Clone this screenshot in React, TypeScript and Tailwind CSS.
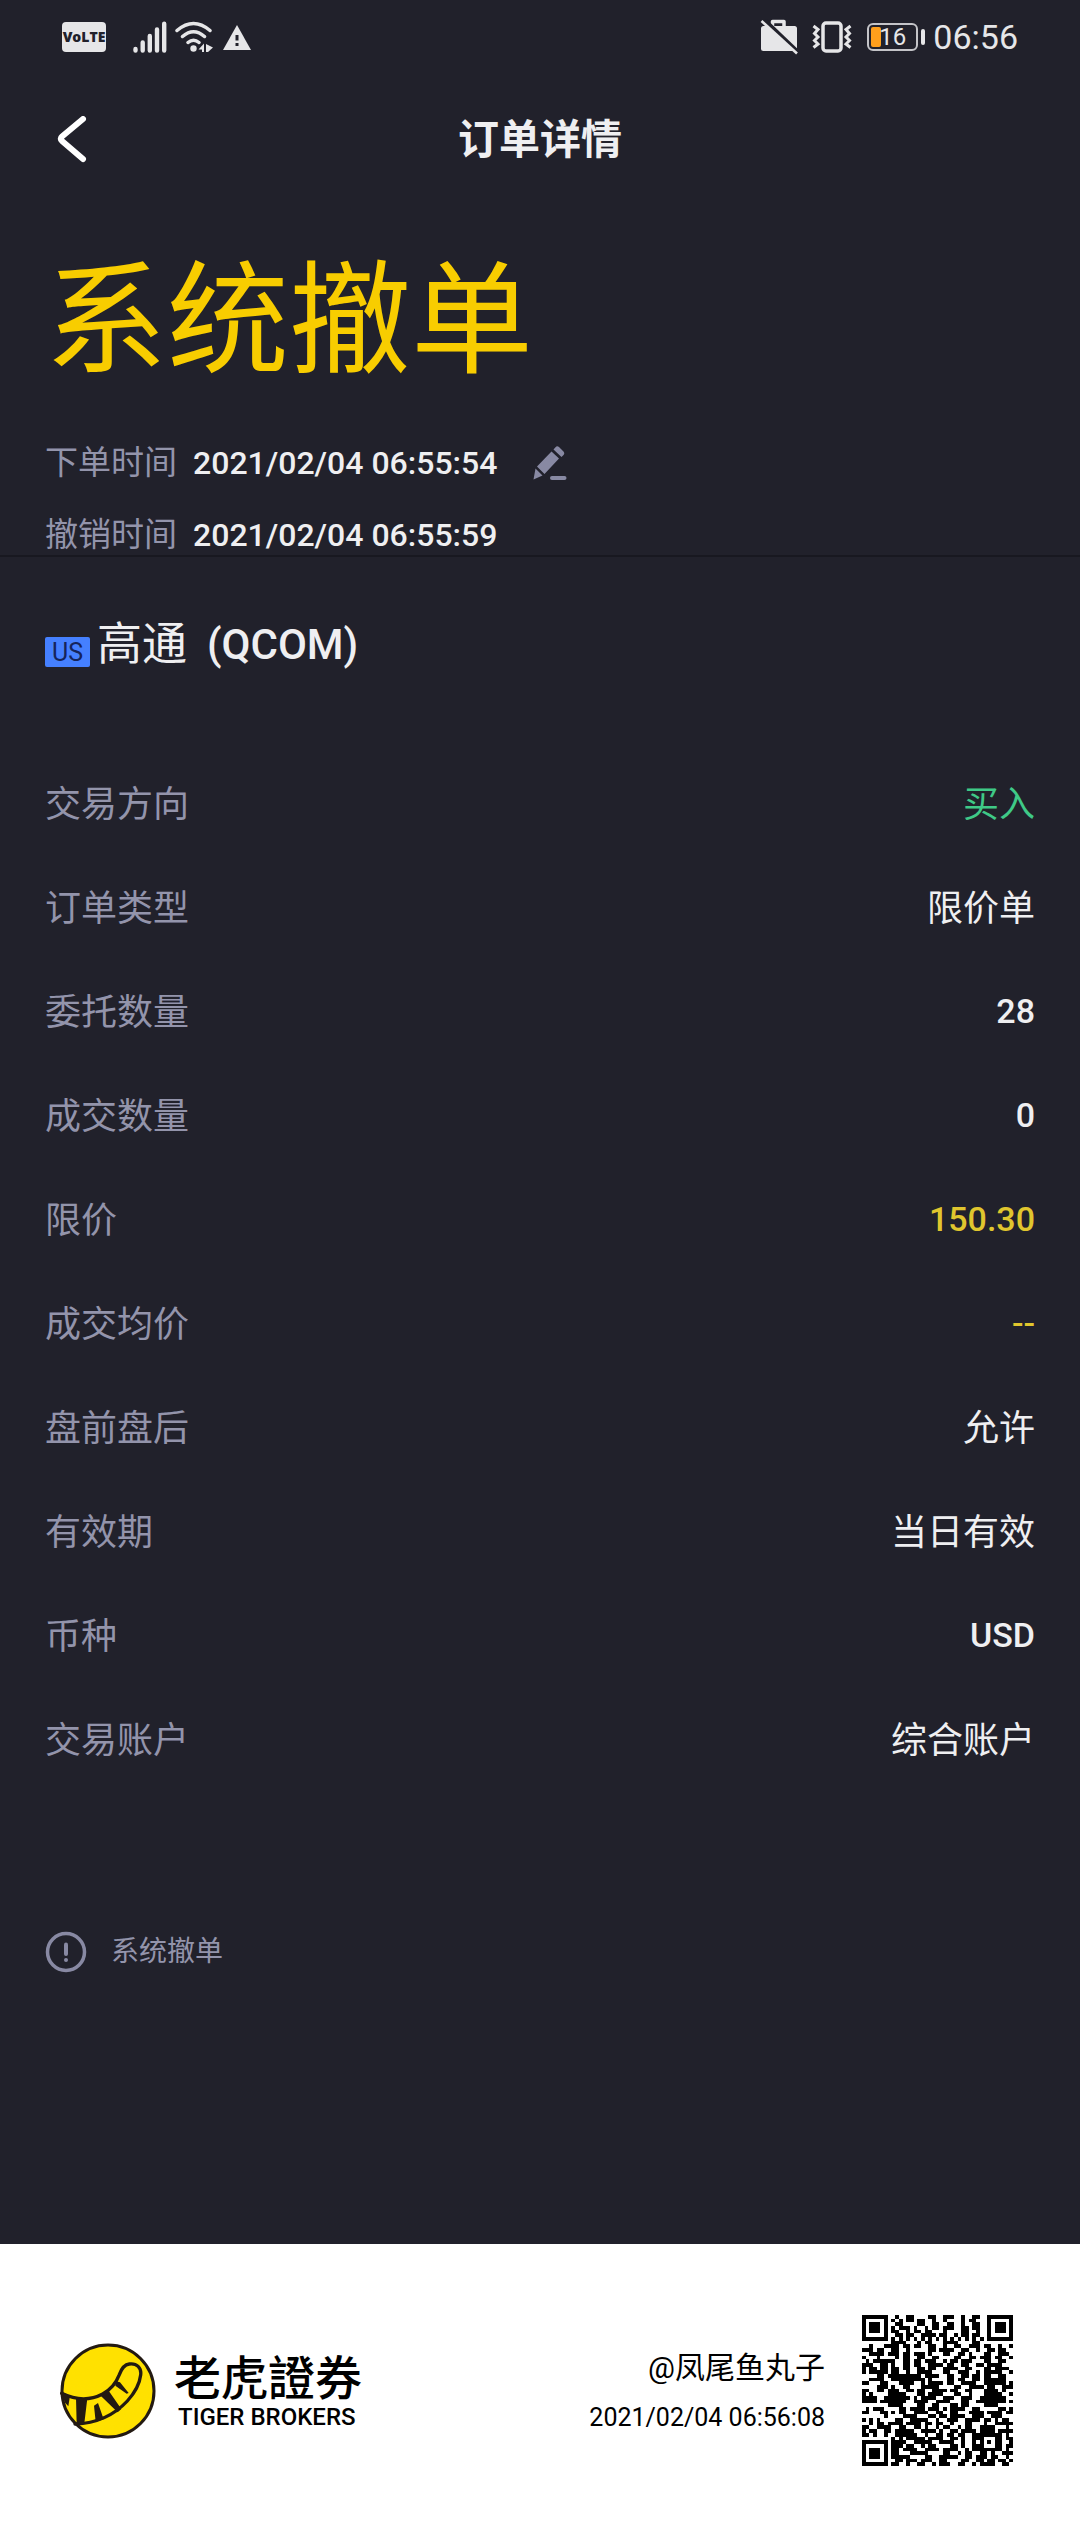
import React from "react";

type Row = { label: string; value: string; tone: string };

const rows: Row[] = [
  { label: "交易方向", value: "买入", tone: "text-[#3fc987] text-4xl" },
  { label: "订单类型", value: "限价单", tone: "text-[#efeff1] text-4xl" },
  { label: "委托数量", value: "28", tone: "text-[#efeff1] text-[34px] font-medium pb-1" },
  { label: "成交数量", value: "0", tone: "text-[#efeff1] text-[34px] font-medium pb-1" },
  { label: "限价", value: "150.30", tone: "text-[#e0c62e] text-[34px] font-medium pb-1" },
  { label: "成交均价", value: "--", tone: "text-[#e0c62e] text-[34px] font-medium pb-1" },
  { label: "盘前盘后", value: "允许", tone: "text-[#efeff1] text-4xl" },
  { label: "有效期", value: "当日有效", tone: "text-[#efeff1] text-4xl" },
  { label: "币种", value: "USD", tone: "text-[#efeff1] text-[34px] font-medium pb-1" },
  { label: "交易账户", value: "综合账户", tone: "text-[#efeff1] text-4xl" },
];

const qr = [
  "#######..#..##....##..###..#..##..#######",
  "#.....#.#.#.##.##..#..#....#.##...#.....#",
  "#.###.#..##....##..##..##..#..##..#.###.#",
  "#.###.#.#.###.#..#.##.###..##.##..#.###.#",
  "#.###.#.##..#.##.##...#....##..#..#.###.#",
  "#.....#..##.##..####.##..#.##.##..#.....#",
  "#######.#.#.#.#.#.#.#.#.#.#.#.#.#.#######",
  "........####...#.##...####....##.........",
  "..#...####.##.##..##..#..##..###.##..#..#",
  "###.##..##..#.....##.####..##..#..##.##..",
  "..####.###.##.###.#...##..##.#...##..###.",
  "#...#....#.##..##..##....##..##.###.##..#",
  ".#.######..##.##.###..#.##.###...##..##..",
  "###..##.#..##.##..####.##..##..##.####...",
  "#.##.##.##.##..##.##..####..##...##.####.",
  "#.#####.##..#..####...##..###..#.#####..#",
  "....##.#########.####..##..##.##.##..##..",
  "..####..#########.#....##.##..##.######..",
  "##...##...####..#.####.##..####..######.#",
  "....###.#..##...#####....##..####.##..###",
  "##..##.###..##.##..####.##..##...####.#..",
  "#.#....#####...##.####...##..#...#####..#",
  "####..#######.#.####..###..###..#######..",
  "####.#######..####..####...##..########.#",
  ".......####....##..##...##.##....####....",
  ".#.###....##.####.###.#.####..##.....##.#",
  "##...##.#.##..####..##..##...####.####.##",
  "......#....####...##.##.####..###..###...",
  "#.#.#....##..#####..#..###..####.##.#.##.",
  "..#.##.####.####.##.##..#...##...#..#####",
  "##..####..##..##.#..#.##..#.##..####...#.",
  "#.##..##.#####..####.#..##.####.####.####",
  "##.#..#..######..#..##.##.##..########.#.",
  "........#.#.#####.####..##.#..###...##.##",
  "#######.####..#####..####..#..#.#.#.##..#",
  "#.....#.###.##..#.##....##.#..###...##.##",
  "#.###.#.##.####..####.####..#.########.#.",
  "#.###.#.##...#####....##..#.##..##.#..###",
  "#.###.#.#####....##..#####..##.###.##..#.",
  "#.....#..##.###.###..##....##..##.##.##.#",
  "#######.##..#..##..#.###..##..#.####..##.",
];

function QrCode() {
  const d = qr
    .map((line, y) =>
      line
        .split("")
        .map((c, x) => (c === "#" ? `M${x} ${y}h1v1h-1z` : ""))
        .join("")
    )
    .join("");
  return (
    <svg className="size-[151px] shrink-0" viewBox="0 0 41 41" shapeRendering="crispEdges" role="img" aria-label="二维码">
      <path d={d} fill="#000" />
    </svg>
  );
}

function TigerLogo() {
  return (
    <svg className="size-24 shrink-0" viewBox="0 0 288 288" aria-hidden="true">
      <circle cx="144" cy="144" r="138" fill="#ffe100" stroke="#231a12" strokeWidth="9" />
      <path
        d="M5 151C48 172 92 172 128 153C152 140 168 121 178 95C184 78 191 65 208 63C230 60 245 74 242 96C239 122 222 152 202 174C163 216 110 241 45 243"
        fill="none"
        stroke="#231a12"
        strokeWidth="10"
        strokeLinecap="round"
      />
      <path
        d="M5 148L30 158L25 190L14 178ZM48 165L82 166L73 241L50 242ZM102 188L114 180L131 229L107 236ZM122 158L146 143L184 198L173 208ZM168 115L180 118L206 150L200 152L166 128Z"
        fill="#231a12"
      />
    </svg>
  );
}

function StatusBar() {
  return (
    <div className="flex h-[74px] items-center justify-between px-[62px] text-[#e6e6e8]">
      <div className="flex items-center">
        <div className="flex h-[30px] w-11 items-center justify-center rounded-sm bg-[#e6e6e8] font-['Open_Sans',sans-serif] text-sm font-extrabold leading-5 text-[#21212b]">
          VoLTE
        </div>
        <svg className="ml-[27px] h-8 w-[34px]" viewBox="0 0 34 32" stroke="#e6e6e8" strokeWidth="4.4" strokeLinecap="round" aria-hidden="true">
          <path d="M2.5 28v1.5M9.7 21.500v8M16.800 15v14.500M24 8.500v21M31.200 2.800v26.700" />
        </svg>
        <svg className="ml-2 h-8 w-[38px]" viewBox="0 0 38 32" fill="none" stroke="#e6e6e8" strokeLinecap="round" aria-hidden="true">
          <path d="M2 9.500Q18.500-4.500 35 9.500M7.500 15.500Q18.500 6 29.500 15.500M13 21.500Q18.500 17 24 21.500" strokeWidth="3.500" />
          <circle cx="18.500" cy="27.500" r="3.200" fill="#e6e6e8" stroke="none" />
          <path d="M23.500 28.500L29 22.500V31H27V28.500ZM31 23L38 26.500L33 31H31Z" fill="#e6e6e8" stroke="none" />
        </svg>
        <svg className="ml-[10px] h-[25px] w-7" viewBox="0 0 28 25" aria-hidden="true">
          <path d="M14 0L28 25H0Z" fill="#e6e6e8" />
          <path d="M12.500 10h3v5.500h-3zM12.500 18h3v3h-3z" fill="#21212b" />
        </svg>
      </div>
      <div className="flex items-center">
        <svg className="h-9 w-[38px]" viewBox="0 0 38 36" aria-hidden="true">
          <path d="M12.500 8V2.500H24V8" fill="none" stroke="#e6e6e8" strokeWidth="3.500" strokeLinejoin="round" />
          <rect x="1" y="7" width="36" height="25" rx="2.500" fill="#e6e6e8" />
          <path d="M5 1.500L40 35" stroke="#21212b" strokeWidth="4" />
          <path d="M1.500 2L37 34.500" stroke="#e6e6e8" strokeWidth="2.600" />
        </svg>
        <svg className="ml-[14px] h-8 w-10" viewBox="0 0 40 32" fill="none" stroke="#e6e6e8" aria-hidden="true">
          <rect x="11" y="2" width="18" height="28" rx="3" strokeWidth="3.500" />
          <path d="M1.500 5L6 8.500L2.500 12.500L6 16L2.500 19.500L6 23L1.500 26.500M38.500 5L34 8.500L37.500 12.500L34 16L37.500 19.500L34 23L38.500 26.500" strokeWidth="3" />
        </svg>
        <div className="ml-[15px] flex items-center gap-[3px]">
          <div className="relative flex h-7 w-[51px] items-center justify-center rounded-md border-2 border-[#c4c4c8]">
            <span className="absolute inset-y-[2px] left-[2px] w-[10px] rounded-xs bg-[#ff9f1c]" />
            <span className="relative text-2xl leading-none">16</span>
          </div>
          <span className="h-4 w-1 rounded-sm bg-[#e6e6e8]" />
        </div>
        <span className="ml-2 text-[34px] leading-10">06:56</span>
      </div>
    </div>
  );
}

export default function App() {
  return (
    <div className="flex min-h-screen flex-col bg-[#21212b] font-['Roboto','Noto_Sans_CJK_SC',sans-serif] text-[#efeff1]">
      <StatusBar />

      <header className="grid h-[132px] grid-cols-[1fr_auto_1fr] items-center px-[54px]">
        <button type="button" aria-label="返回" className="justify-self-start">
          <svg className="h-12 w-9" viewBox="0 0 36 48" fill="none" stroke="#fff" strokeWidth="6" strokeLinecap="round" strokeLinejoin="round" aria-hidden="true">
            <path d="M29 3L8 20.500Q5.500 22.500 8 25L29 43" />
          </svg>
        </button>
        <h1 className="text-[41px] font-bold leading-[60px]">订单详情</h1>
      </header>

      <section className="border-b-2 border-[#181820] px-[45px] pt-14">
        <h2 className="text-[122px] leading-[120px] text-[#f8cd00]">系统撤单</h2>
        <dl className="mt-[61px] flex flex-col gap-8 leading-10">
          <div className="flex items-center">
            <dt className="text-[33px] text-[#9394ab]">下单时间</dt>
            <dd className="ml-4 text-[32px] font-medium">2021/02/04 06:55:54</dd>
            <dd className="ml-9 flex">
              <button type="button" aria-label="编辑">
                <svg className="size-[34px]" viewBox="0 0 34 34" fill="#8889a3" aria-hidden="true">
                  <path d="M0.500 33.500L2.500 22.500L9.500 29.500ZM4 20.500L18.500 5.500L26 12.500L11.500 28ZM20.500 3.500L22.500 1.200Q24-0.500 26 1L30.500 5.500Q32 7.500 30.500 9L28.500 11Z" />
                  <rect x="17" y="30" width="16.500" height="4" rx="2" />
                </svg>
              </button>
            </dd>
          </div>
          <div className="flex items-center">
            <dt className="text-[33px] text-[#9394ab]">撤销时间</dt>
            <dd className="ml-4 text-[32px] font-medium">2021/02/04 06:55:59</dd>
          </div>
        </dl>
      </section>

      <main className="flex-1 px-[45px] pt-[58px]">
        <div className="flex items-center gap-[7px]">
          <span className="mt-[14px] flex h-[30px] w-[45px] items-center justify-center rounded-xs bg-[#4580ff] text-[25px] leading-none text-[#15245a]">US</span>
          <h3 className="flex items-center text-[45px] leading-[60px]">
            高通<span className="ml-5 text-[42px] font-medium">(QCOM)</span>
          </h3>
        </div>

        <dl className="mt-[78px]">
          {rows.map((r) => (
            <div key={r.label} className="flex h-[104px] items-center justify-between">
              <dt className="text-4xl text-[#9394ab]">{r.label}</dt>
              <dd className={r.tone}>{r.value}</dd>
            </div>
          ))}
        </dl>

        <div className="mb-16 mt-[138px] flex items-center gap-6">
          <svg className="size-[42px]" viewBox="0 0 42 42" fill="none" stroke="#8889a3" aria-hidden="true">
            <circle cx="21" cy="21" r="18.500" strokeWidth="3.500" />
            <path d="M21 13.500v9.500" strokeWidth="4" strokeLinecap="round" />
            <circle cx="21" cy="29" r="2" fill="#8889a3" stroke="none" />
          </svg>
          <p className="text-[28px] leading-10 text-[#9394ab]">系统撤单</p>
        </div>
      </main>

      <footer className="flex h-[293px] items-center justify-between bg-white pl-[60px] pr-[67px] text-black">
        <div className="flex items-center gap-[18px]">
          <TigerLogo />
          <div className="pb-1">
            <p className="font-['Noto_Sans_CJK_TC',sans-serif] text-[47px] font-medium leading-[56px]">老虎證券</p>
            <p className="ml-1 text-2xl font-medium leading-7">TIGER BROKERS</p>
          </div>
        </div>
        <div className="flex items-center gap-[37px]">
          <div className="pt-1 text-right">
            <p className="text-[30px] leading-[50px]">@凤尾鱼丸子</p>
            <p className="text-[25px] leading-[50px]">2021/02/04 06:56:08</p>
          </div>
          <QrCode />
        </div>
      </footer>
    </div>
  );
}
